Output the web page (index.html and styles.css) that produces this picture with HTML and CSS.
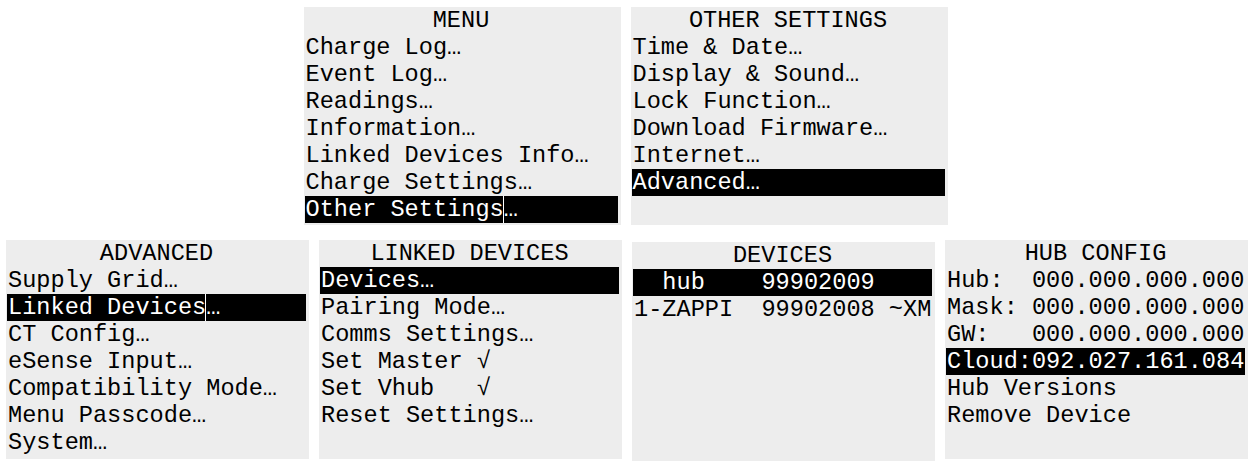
FILE: index.html
```html
<!DOCTYPE html>
<html lang="en">
<head>
    <meta charset="UTF-8">
    <title>Menu Screens</title>
    <link rel="stylesheet" href="styles.css">
</head>
<body>
    <div class="row top">
        <div class="panel wide">
            <div class="title">MENU</div>
            <div class="item">Charge Log…</div>
            <div class="item">Event Log…</div>
            <div class="item">Readings…</div>
            <div class="item">Information…</div>
            <div class="item">Linked Devices Info…</div>
            <div class="item">Charge Settings…</div>
            <div class="item selected"><span class="cursor">Other Settings</span>…</div>
        </div>
        <div class="panel wide">
            <div class="title">OTHER SETTINGS</div>
            <div class="item">Time &amp; Date…</div>
            <div class="item">Display &amp; Sound…</div>
            <div class="item">Lock Function…</div>
            <div class="item">Download Firmware…</div>
            <div class="item">Internet…</div>
            <div class="item selected">Advanced…</div>
        </div>
    </div>
    <div class="row bottom">
        <div class="panel">
            <div class="title">ADVANCED</div>
            <div class="item">Supply Grid…</div>
            <div class="item selected"><span class="cursor">Linked Devices</span>…</div>
            <div class="item">CT Config…</div>
            <div class="item">eSense Input…</div>
            <div class="item">Compatibility Mode…</div>
            <div class="item">Menu Passcode…</div>
            <div class="item">System…</div>
        </div>
        <div class="panel">
            <div class="title">LINKED DEVICES</div>
            <div class="item selected">Devices…</div>
            <div class="item">Pairing Mode…</div>
            <div class="item">Comms Settings…</div>
            <div class="item">Set Master √</div>
            <div class="item">Set Vhub   √</div>
            <div class="item">Reset Settings…</div>
        </div>
        <div class="panel lower">
            <div class="title">DEVICES</div>
            <div class="item selected">  hub    99902009</div>
            <div class="item">1-ZAPPI  99902008 ~XM</div>
        </div>
        <div class="panel">
            <div class="title">HUB CONFIG</div>
            <div class="item">Hub:  000.000.000.000</div>
            <div class="item">Mask: 000.000.000.000</div>
            <div class="item">GW:   000.000.000.000</div>
            <div class="item selected">Cloud:092.027.161.084</div>
            <div class="item">Hub Versions</div>
            <div class="item">Remove Device</div>
        </div>
    </div>
</body>
</html>
```

FILE: styles.css
```css
body {
    margin: 0;
    background-color: #fff;
    font-family: 'Liberation Mono', 'Courier New', monospace;
    font-size: 23.6px;
    color: #000;
}
.row {
    display: flex;
}
.top {
    justify-content: center;
    gap: 10px;
    margin-top: 7px;
}
.bottom {
    gap: 10px;
    padding-left: 6px;
    margin-top: 15px;
}
.panel {
    background-color: #ededed;
    width: 303px;
    height: 219px;
    padding: 0 3px 0 1px;
    box-sizing: border-box;
}
.panel.wide {
    width: 317px;
    height: 218px;
}
.panel.lower {
    margin-top: 2px;
}
.title {
    text-align: center;
    line-height: 27px;
    white-space: pre;
}
.item {
    line-height: 27px;
    height: 27px;
    padding-left: 1px;
    white-space: pre;
    overflow: hidden;
}
.item.selected {
    background-color: #000;
    color: #fff;
}
.cursor {
    display: inline-block;
    box-shadow: inset -1px 0 0 #fff;
}
```
